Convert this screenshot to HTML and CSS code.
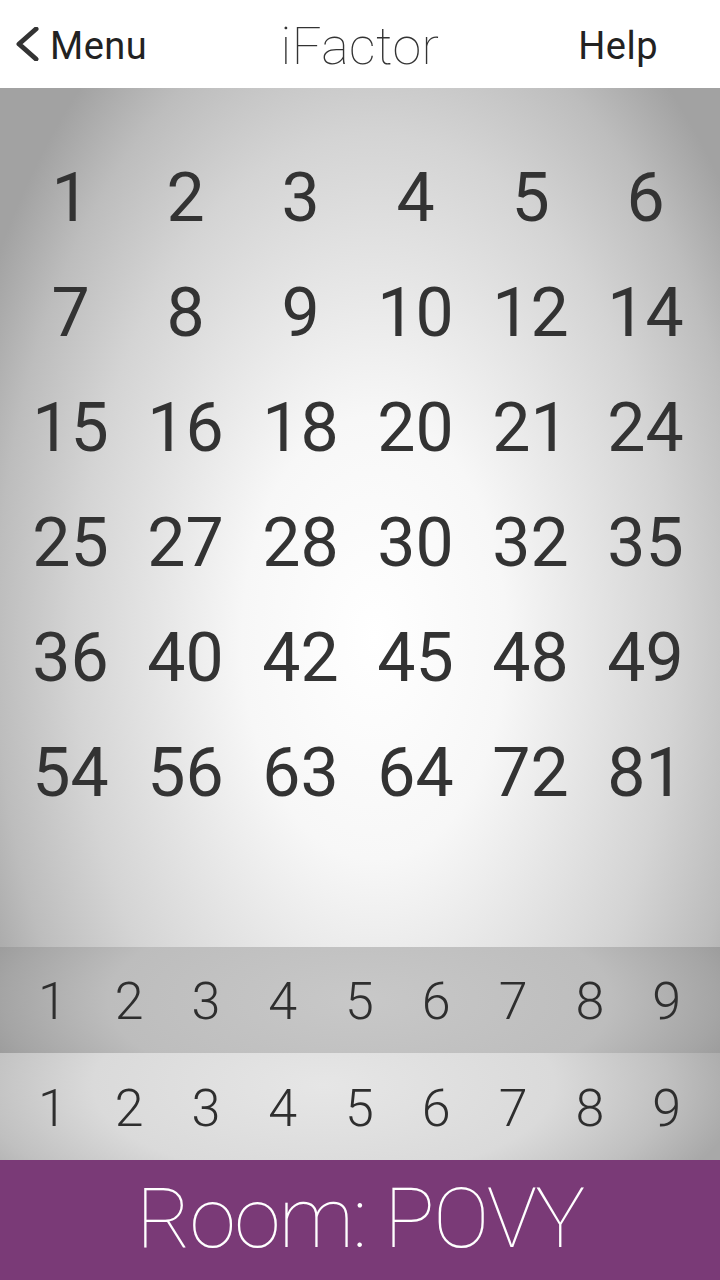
FILE: index.html
```html
<!DOCTYPE html>
<html lang="en">
<head>
<meta charset="utf-8">
<title>iFactor</title>
<link rel="stylesheet" href="styles.css">
</head>
<body>
<div class="app">
  <header class="nav">
    <div class="nav-left">
      <svg class="chev" width="26" height="34" viewBox="0 0 26 34"><polyline points="22,2 5,17 22,32" fill="none" stroke="#333" stroke-width="5" stroke-linecap="round" stroke-linejoin="round"/></svg>
      <span class="nav-btn">Menu</span>
    </div>
    <div class="nav-title">iFactor</div>
    <div class="nav-right"><span class="nav-btn">Help</span></div>
  </header>
  <main class="board">
    <div class="grid">
      <span>1</span><span>2</span><span>3</span><span>4</span><span>5</span><span>6</span>
      <span>7</span><span>8</span><span>9</span><span>10</span><span>12</span><span>14</span>
      <span>15</span><span>16</span><span>18</span><span>20</span><span>21</span><span>24</span>
      <span>25</span><span>27</span><span>28</span><span>30</span><span>32</span><span>35</span>
      <span>36</span><span>40</span><span>42</span><span>45</span><span>48</span><span>49</span>
      <span>54</span><span>56</span><span>63</span><span>64</span><span>72</span><span>81</span>
    </div>
  </main>
  <div class="picker picker-dark">
    <span>1</span><span>2</span><span>3</span><span>4</span><span>5</span><span>6</span><span>7</span><span>8</span><span>9</span>
  </div>
  <div class="picker picker-light">
    <span>1</span><span>2</span><span>3</span><span>4</span><span>5</span><span>6</span><span>7</span><span>8</span><span>9</span>
  </div>
  <footer class="room">Room: POVY</footer>
</div>
</body>
</html>
```

FILE: styles.css
```css
html, body {
  margin: 0;
  padding: 0;
}
body {
  width: 720px;
  height: 1280px;
  overflow: hidden;
  font-family: Roboto, "Liberation Sans", sans-serif;
  color: #333;
}
.app {
  display: flex;
  flex-direction: column;
  height: 1280px;
}
.nav {
  height: 88px;
  background: #fff;
  display: grid;
  grid-template-columns: 1fr auto 1fr;
  align-items: center;
}
.nav-left {
  display: flex;
  align-items: center;
  padding-left: 14px;
  gap: 10px;
}
.chev {
  display: block;
  margin-top: 0px;
}
.nav-btn {
  font-size: 38px;
  font-weight: 400;
  color: #222;
  line-height: 1;
  padding-top: 4px;
  letter-spacing: 0.5px;
}
.nav-title {
  font-size: 52px;
  font-weight: 100;
  color: #333;
  line-height: 1;
  padding-top: 6px;
  letter-spacing: 0.5px;
}
.nav-right {
  display: flex;
  justify-content: flex-end;
  padding-right: 62px;
}
.board {
  height: 859px;
  background-color: #999;
  background-image: radial-gradient(ellipse 440px 740px at 52% 64%, #ffffff 0%, #f7f7f7 30%, #d4d4d4 68%, #bdbdbd 86%, #a2a2a2 100%);
  padding: 53px 17px 0 13px;
  box-sizing: border-box;
}
.grid {
  display: grid;
  grid-template-columns: repeat(6, 1fr);
  grid-auto-rows: 115px;
}
.grid span {
  font-size: 68px;
  line-height: 115px;
  text-align: center;
  color: #333;
}
.picker {
  display: grid;
  grid-template-columns: repeat(9, 1fr);
  padding: 0 15px 0 14px;
  align-items: center;
}
.picker span {
  font-size: 52px;
  font-weight: 300;
  text-align: center;
  color: #2e2e2e;
  line-height: 1;
  padding-top: 4px;
}
.picker-dark {
  height: 106px;
  background-color: #999;
  background-image: radial-gradient(ellipse 420px 160px at 50% 50%, #c8c8c8 0%, #bdbdbd 60%, #a5a5a5 85%, #939393 100%);
}
.picker-light {
  height: 107px;
  background-color: #aaa;
  background-image: radial-gradient(ellipse 420px 170px at 45% 30%, #e6e6e6 0%, #dadada 55%, #c0c0c0 82%, #a8a8a8 100%);
}
.room {
  flex: 1;
  background: #7a3a77;
  color: #fff;
  font-size: 84px;
  font-weight: 100;
  letter-spacing: -1.6px;
  display: flex;
  align-items: center;
  justify-content: center;
  line-height: 1;
  padding-bottom: 2px;
}
```
